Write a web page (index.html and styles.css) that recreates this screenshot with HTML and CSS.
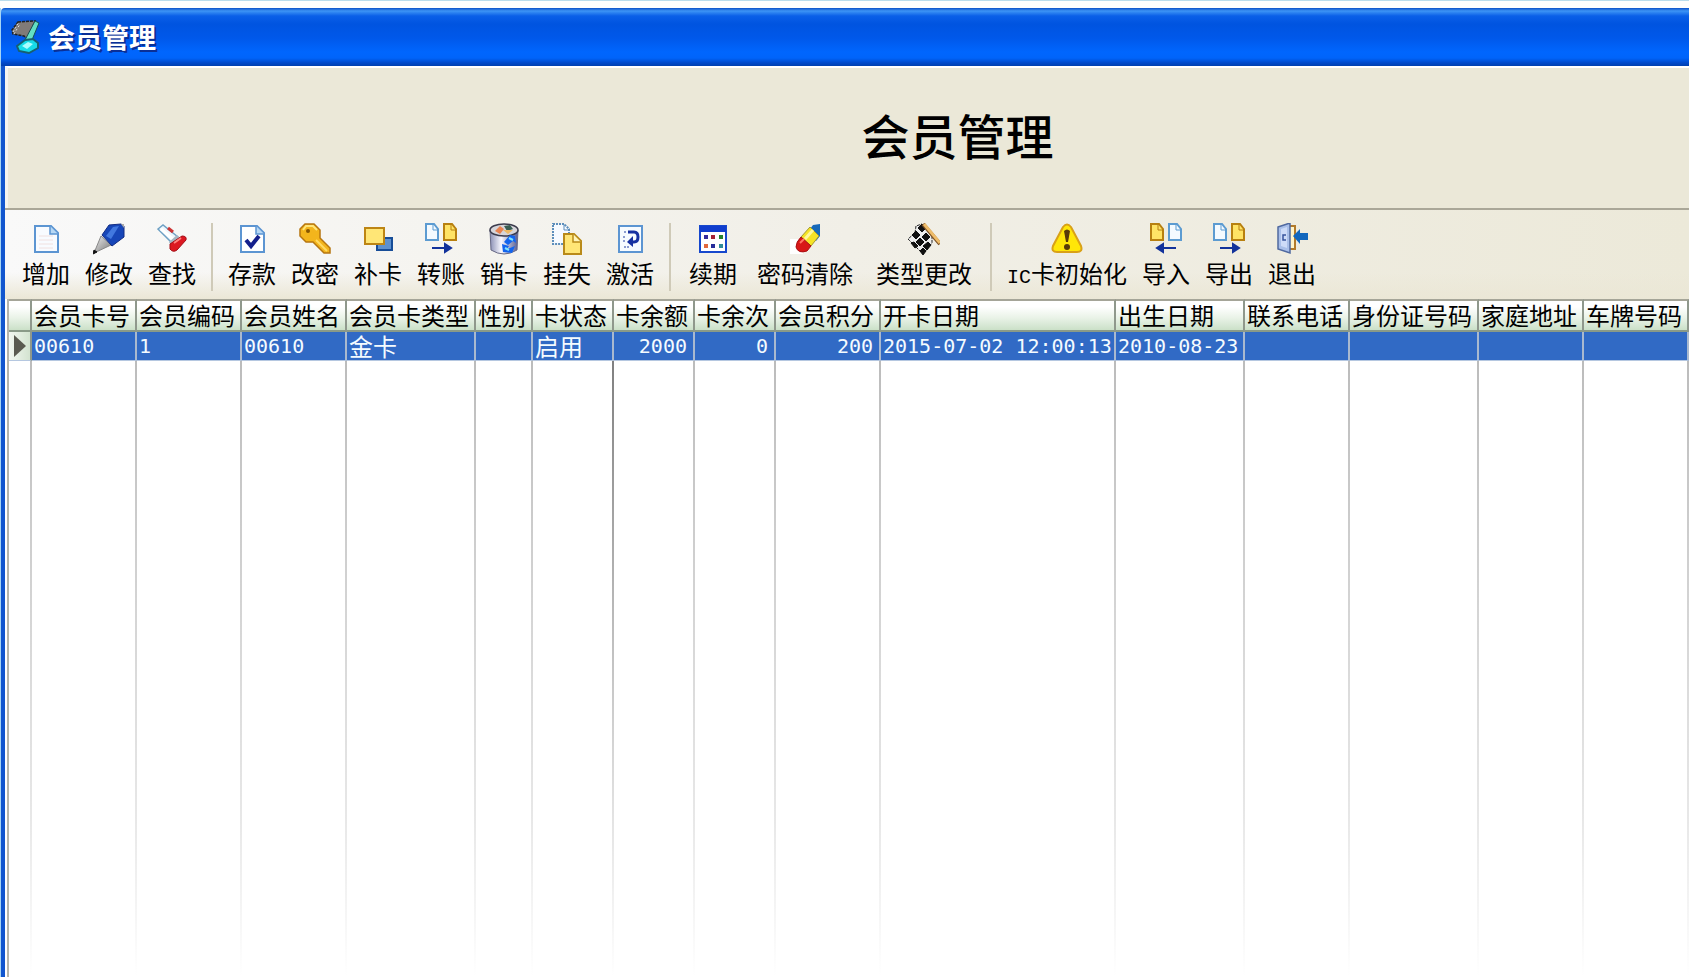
FILE: index.html
```html
<!DOCTYPE html>
<html lang="zh-CN">
<head>
<meta charset="utf-8">
<title>会员管理</title>
<link rel="stylesheet" href="styles.css">
</head>
<body>
<svg width="0" height="0" class="defs" aria-hidden="true">
  <defs>
    <symbol id="doc-small" viewBox="0 0 14 18"><path d="M1 1h8l4 5v11H1z" stroke-width="2"/><path d="M8 1v6h5" stroke-width="1" fill="none"/></symbol>
    <linearGradient id="tip" x1="0" y1="0" x2="1" y2="1"><stop offset="0" stop-color="#eee"/><stop offset="1" stop-color="#777"/></linearGradient>
    <linearGradient id="glass"><stop offset="0" stop-color="#8a8fb4"/><stop offset=".4" stop-color="#f8f8ff"/><stop offset="1" stop-color="#555b90"/></linearGradient>
  </defs>
</svg>
<div class="window">
  <header class="titlebar">
    <svg class="app-icon" viewBox="0 0 30 34"><path d="M7 2 24 1 17 19 13 16 2 14 1 10z" fill="#807b78" stroke="#222" stroke-width="1.5" stroke-dasharray="3 1"/><path d="M2 12 8 2M3 14 9 4" stroke="#ddd" stroke-dasharray="2 2"/><path d="M24 1 28 3 21 20 14 20z" fill="#62dfc4" stroke="#174e52"/><path d="m14 20 8-1 5 4v5l-9 5-10-2-2-5z" fill="#16dce8" stroke="#176070" stroke-width="2"/><path d="m11 26 6-4 5 2-6 5z" fill="#aff"/></svg>
    <span class="caption">会员管理</span>
  </header>
  <main class="client">
    <div class="banner"><h1>会员管理</h1></div>
    <div class="toolbar" role="toolbar" aria-label="会员管理">
      <div class="group">
        <button type="button"><svg class="icon" viewBox="0 0 32 32"><path d="M5 3h16l7 7v19H5z" fill="#f8fbff" stroke="#5c95d2" stroke-width="2"/><path d="M20 3v8h8" fill="#b7d8f5" stroke="#5c95d2" stroke-width="1.5"/><path d="M9 13h14M9 17h14M9 21h14M9 25h14" stroke="#f0e0df"/></svg><span>增加</span></button>
        <button type="button"><svg class="icon" viewBox="0 0 32 32"><path d="m8 13 10 9L1 30z" fill="url(#tip)" stroke="#888"/><path d="m0 31 1-4 3 2z" fill="#111" stroke="#111"/><path d="M9 12 16 2 28 1 31 3v11l-12 9z" fill="#1746b8" stroke="#122c83"/><path d="m13 13 7-9 6-1-8 13z" fill="#4278df"/><path d="M28 1h3v4z" fill="#aaa"/></svg><span>修改</span></button>
        <button type="button"><svg class="icon" viewBox="0 0 32 32"><path d="m2 6 5-4 15 12-6 6z" fill="#edf6fc" stroke="#6ea0c4" stroke-width="1.5"/><path d="m5 6 13 11" stroke="#fff" stroke-width="3"/><path d="m12 5 5 4" stroke="#c33" stroke-width="3"/><path d="m21 12 3 3-9 8-2-4z" fill="#a6b5c1"/><path d="M26 13q5 0 4 4l-9 10q-4 3-7-1v-5z" fill="#dc1821" stroke="#a30d15"/><path d="m18 20 7-5" stroke="#ff837f" stroke-width="2"/></svg><span>查找</span></button>
      </div>
      <div class="separator" role="separator"></div>
      <div class="group">
        <button type="button"><svg class="icon" viewBox="0 0 32 32"><path d="M5 3h16l7 7v19H5z" fill="#fff" stroke="#5c95d2" stroke-width="2"/><path d="M20 3v8h8" fill="#b7d8f5" stroke="#5c95d2" stroke-width="1.5"/><path d="m10 17 5 6 8-10" fill="none" stroke="#14208c" stroke-width="4"/></svg><span>存款</span></button>
        <button type="button"><svg class="icon" viewBox="0 0 32 32"><path d="M6 1h9l6 6v8l10 10v5h-6L14 19H7l-6-6V6z" fill="#f3b51c" stroke="#b67610" stroke-width="1.5"/><path d="M4 7 7 3h7l4 4" fill="none" stroke="#ffe578" stroke-width="2"/><path d="m17 17 11 11" stroke="#ffda65" stroke-width="2"/><circle cx="9" cy="8" r="2" fill="#865500"/></svg><span>改密</span></button>
        <button type="button"><svg class="icon" viewBox="0 0 32 32"><path d="M15 15h15v12H15z" fill="#5e91cf" stroke="#174d98" stroke-width="2"/><path d="M3 5h19v16H3z" fill="#ffe676" stroke="#bd8514" stroke-width="2"/></svg><span>补卡</span></button>
        <button type="button"><svg class="icon" viewBox="0 0 32 32"><use href="#doc-small" width="14" height="18" fill="#f4faff" stroke="#5c9bd1"/><use href="#doc-small" x="18" width="14" height="18" fill="#ffe365" stroke="#b88010"/><path d="M7 25h13v-4l6 4-6 4v-4" fill="#12329b" stroke="#12329b" stroke-width="2"/></svg><span>转账</span></button>
        <button type="button"><svg class="icon" viewBox="0 0 32 32"><path d="M2 7h28l-1 20q-13 8-26 0z" fill="url(#glass)" stroke="#686a86"/><ellipse cx="16" cy="7" rx="14" ry="6" fill="#d6d5da" stroke="#3b3b4c" stroke-width="1.5"/><path d="m7 8 5-5 4 3-4 5z" fill="#e88250"/><path d="m16 3 6-1 3 4-6 2z" fill="#385d52"/><path d="m15 7 5 4 5-4" fill="#edba67"/><path d="m16 19 6-7 5 1 1 7-3-2-5 4zM14 21l7 2-2 3 8-3-3 7-9-1z" fill="#1264ee"/><path d="m21 15 4 2m-8 8 4 2" stroke="#80e4ff" stroke-width="2"/></svg><span>销卡</span></button>
        <button type="button"><svg class="icon" viewBox="0 0 32 32"><path d="M2 1h11l5 5v15H2z" fill="#f6faff" stroke="#5d8ebb" stroke-width="2" stroke-dasharray="2 1"/><path d="M13 1v6h5" fill="none" stroke="#5d8ebb"/><path d="M13 11h10l7 7v13H13z" fill="#ffe676" stroke="#b98a19" stroke-width="2"/><path d="M22 11v8h8" fill="#fff5b8" stroke="#b98a19" stroke-width="1.5"/></svg><span>挂失</span></button>
        <button type="button"><svg class="icon" viewBox="0 0 32 32"><path d="M5 3h23v26H5z" fill="#f7fbff" stroke="#5c95d2" stroke-width="2"/><path d="M10 9h3M9 14h3M9 18h3M10 24h6" stroke="#8c9ccf" stroke-width="2" stroke-dasharray="2 1"/><path d="M14 9h6q4 0 4 5t-4 5h-2" fill="none" stroke="#1731a1" stroke-width="3"/><path d="m19 13v11l-6-5z" fill="#1731a1"/></svg><span>激活</span></button>
      </div>
      <div class="separator" role="separator"></div>
      <div class="group group-wide">
        <button type="button"><svg class="icon" viewBox="0 0 32 32"><path d="M3 3h26v26H3z" fill="#fff" stroke="#1748cd" stroke-width="2"/><path d="M3 3h26v6H3z" fill="#103dce"/><path d="M7 12h4v4H7z" fill="#342b9c"/><path d="M14 12h4v4h-4z" fill="#a42136"/><path d="M22 12h4v4h-4z" fill="#26822d"/><path d="M7 21h4v4H7z" fill="#e2683c"/><path d="M14 21h4v4h-4z" fill="#262c9a"/><path d="M22 21h4v4h-4z" fill="#318b98"/></svg><span>续期</span></button>
        <button type="button" class="wide"><svg class="icon" viewBox="0 0 32 32"><path d="M1 16h13v15H1z" fill="#fff"/><path d="m24 2 7-1v12l-4 5-9-8z" fill="#1769b9"/><path d="m21 4 9 9-8 10-10-9z" fill="#f5e326" stroke="#a39a30"/><path d="m24 7-8 9" stroke="#fff89c" stroke-width="3"/><path d="m12 14 10 9-4 5q-9 3-11-4 0-5 5-10z" fill="#d81817" stroke="#a90e12"/><path d="m11 20 4-4" stroke="#ff7464" stroke-width="2"/></svg><span>密码清除</span></button>
        <button type="button" class="wide"><svg class="icon" viewBox="0 0 32 32"><path d="M14 1 24 11 24 20 15 31 9 25 0 16 7 10 8 3z" fill="#eee" stroke="#222" stroke-dasharray="3 1"/><path d="m14 1 4 4-4 4-4-4zM8 8l4 4-4 4-4-4zm10 2 4 4-4 4-4-4zm-6 5 4 4-4 4-4-4zm8 4 3 3-4 5-4-4zm-14 0 4 4-3 2-4-5zm9 6 3 3-3 4-3-4z" fill="#111" stroke="#111"/><path d="m15 1 17 20" stroke="#7a5024" stroke-width="4"/><path d="m16 1 16 19" stroke="#eebc6a" stroke-width="3"/></svg><span>类型更改</span></button>
      </div>
      <div class="separator" role="separator"></div>
      <div class="group">
        <button type="button"><svg class="icon" viewBox="0 0 32 32"><path d="M12 4q4-5 8 0l10 19q2 6-4 6H6q-6 0-4-6z" fill="#ffe608" stroke="#d9a117" stroke-width="2"/><path d="M13 8q3-3 6 0l-2 11h-2z" fill="#593b08"/><circle cx="16" cy="24" r="3" fill="#593b08"/></svg><span><span class="latin">IC</span>卡初始化</span></button>
        <button type="button"><svg class="icon" viewBox="0 0 32 32"><use href="#doc-small" width="14" height="18" fill="#ffe365" stroke="#b88010"/><use href="#doc-small" x="18" width="14" height="18" fill="#f4faff" stroke="#5c9bd1"/><path d="M26 25H13v-4l-6 4 6 4v-4" fill="#12329b" stroke="#12329b" stroke-width="2"/></svg><span>导入</span></button>
        <button type="button"><svg class="icon" viewBox="0 0 32 32"><use href="#doc-small" width="14" height="18" fill="#f4faff" stroke="#5c9bd1"/><use href="#doc-small" x="18" width="14" height="18" fill="#ffe365" stroke="#b88010"/><path d="M7 25h13v-4l6 4-6 4v-4" fill="#12329b" stroke="#12329b" stroke-width="2"/></svg><span>导出</span></button>
        <button type="button"><svg class="icon" viewBox="0 0 32 32"><path d="M10 3h9v23h-9" fill="#fff4ca" stroke="#b27a2a" stroke-width="2"/><path d="m2 4 12-4v30L2 26z" fill="#a9bfe9" stroke="#50699f" stroke-width="1.5"/><path d="m5 6 6-2v21l-6-2z" fill="#cddbf8"/><path d="M10 12H7v5h3" fill="none" stroke="#38569d" stroke-width="1.5"/><path d="m17 13 7-7v4h8v7h-8v4z" fill="#1267bd"/></svg><span>退出</span></button>
      </div>
    </div>
    <table class="grid">
      <colgroup><col class="c-mark"><col class="c-4"><col class="c-4"><col class="c-4"><col class="c-5"><col class="c-2"><col class="c-3"><col class="c-3"><col class="c-3"><col class="c-4"><col class="c-time"><col class="c-5"><col class="c-4"><col class="c-5"><col class="c-4"><col class="c-4"><col></colgroup>
      <thead>
        <tr><th></th><th>会员卡号</th><th>会员编码</th><th>会员姓名</th><th>会员卡类型</th><th>性别</th><th>卡状态</th><th>卡余额</th><th>卡余次</th><th>会员积分</th><th>开卡日期</th><th>出生日期</th><th>联系电话</th><th>身份证号码</th><th>家庭地址</th><th>车牌号码</th><th></th></tr>
      </thead>
      <tbody>
        <tr class="selected"><td class="marker"><svg viewBox="0 0 12 22"><path d="M0 0 12 11 0 22z" fill="#5a5a50"/></svg></td><td>00610</td><td>1</td><td>00610</td><td class="han">金卡</td><td></td><td class="han">启用</td><td class="number">2000</td><td class="number">0</td><td class="number">200</td><td>2015-07-02 12:00:13</td><td>2010-08-23</td><td></td><td></td><td></td><td></td><td></td></tr>
        <tr class="filler"><td></td><td></td><td></td><td></td><td></td><td></td><td class="strong"></td><td></td><td></td><td></td><td></td><td></td><td></td><td></td><td></td><td></td><td></td></tr>
      </tbody>
    </table>
  </main>
</div>
</body>
</html>
```
FILE: styles.css
```css
* { box-sizing: border-box; }

html, body { height: 100%; }

body {
  margin: 0;
  padding-top: 7px;
  background: #fdfefe;
  border-top: 1px solid #b9dcec;
  font-family: "Noto Sans CJK SC", sans-serif;
  font-size: 24px;
  line-height: 28px;
  color: #000;
  overflow: hidden;
}

.defs { position: absolute; }

.window {
  height: 100%;
  display: flex;
  flex-direction: column;
  border-left: 1px solid #a5d5f5;
}

.titlebar {
  flex: none;
  height: 58px;
  display: flex;
  align-items: center;
  gap: 7px;
  padding-left: 10px;
  border-top-left-radius: 4px;
  background: linear-gradient(#0a50c8 0, #3d94f5 3px, #0a5fe8 8px, #0054e0 16px, #0058ea 30px, #0066fe 44px, #0064fa 50px, #0048c8 55px, #0040b0 58px);
}

.app-icon { width: 30px; height: 34px; }

.caption {
  font-size: 27px;
  font-weight: 700;
  color: #fff;
  text-shadow: 2px 2px 0 #0a2f96;
}

.client {
  flex: 1;
  min-height: 0;
  display: flex;
  flex-direction: column;
  border-left: 4px solid #1156cf;
  background: #fff;
}

.banner {
  flex: none;
  height: 142px;
  display: flex;
  align-items: center;
  justify-content: center;
  padding: 0 0 8px 218px;
  background: #ebe8d8;
  border-top: 2px solid #fff;
  border-left: 3px solid #f5f5f0;
}

h1 {
  margin: 0;
  font-size: 48px;
  line-height: 56px;
  font-weight: 500;
}

.toolbar {
  flex: none;
  height: 91px;
  display: flex;
  align-items: flex-start;
  gap: 15px;
  padding: 13px 0 0 17px;
  border-top: 2px solid #aaa798;
  background: linear-gradient(transparent 70%, #ebe7d6), linear-gradient(90deg, #f9f9f9, #f1efe7 50%, #ece9d9);
}

.group { display: flex; gap: 15px; }
.group-wide { gap: 17px; padding-left: 3px; }

.toolbar button {
  display: flex;
  flex-direction: column;
  align-items: center;
  gap: 4px;
  padding: 0;
  border: 0;
  background: none;
  font: inherit;
  color: inherit;
  white-space: nowrap;
}

.toolbar .wide { padding: 0 3px; }

.icon { width: 32px; height: 32px; }

.latin { font-family: "Liberation Mono", monospace; font-size: 20px; }

.separator { width: 2px; height: 68px; background: #cfcab8; }

.grid {
  flex: 1;
  width: 100%;
  margin-left: 2px;
  table-layout: fixed;
  border-collapse: separate;
  border-spacing: 0;
  border-left: 2px solid #b5b5ac;
}

.c-mark { width: 23px; }
.c-2 { width: 57px; }
.c-3 { width: 81px; }
.c-4 { width: 105px; }
.c-5 { width: 129px; }
.c-time { width: 235px; }

th, td {
  padding: 0 0 0 2px;
  white-space: nowrap;
  text-align: left;
}

th {
  height: 33px;
  padding-bottom: 1px;
  font-weight: 400;
  border-top: 2px solid #a5a598;
  border-right: 2px solid #8f988c;
  border-bottom: 2px solid #8a9a88;
  background: linear-gradient(#fff 20%, #e8f2e6 60%, #cbe0c8);
}

.selected td {
  height: 29px;
  background: #316ac5;
  color: #f4fbff;
  font-family: "DejaVu Sans Mono", monospace;
  font-size: 20px;
  border-right: 2px solid #a9b9cf;
  border-bottom: 1px solid #b5c7e0;
}

.selected .han { font-family: "Noto Sans CJK SC", sans-serif; font-size: 24px; }

.selected .number { text-align: right; padding-right: 6px; }

.selected .marker {
  padding-left: 5px;
  background: linear-gradient(90deg, #f2f7f0, #d3e3d0);
  border-right-color: #8f988c;
}

.marker svg { display: block; width: 12px; height: 22px; }

.filler td {
  height: 100%;
  background: linear-gradient(#bcbcbc, #d4d4d4 40%, #e8e8e8 75%, #fff) right / 2px 100% no-repeat;
}

.filler .strong { background-image: linear-gradient(#808080, #b8b8b8 40%, #e4e4e4 75%, #fff); }

th:last-child, td:last-child { padding: 0; }
```
